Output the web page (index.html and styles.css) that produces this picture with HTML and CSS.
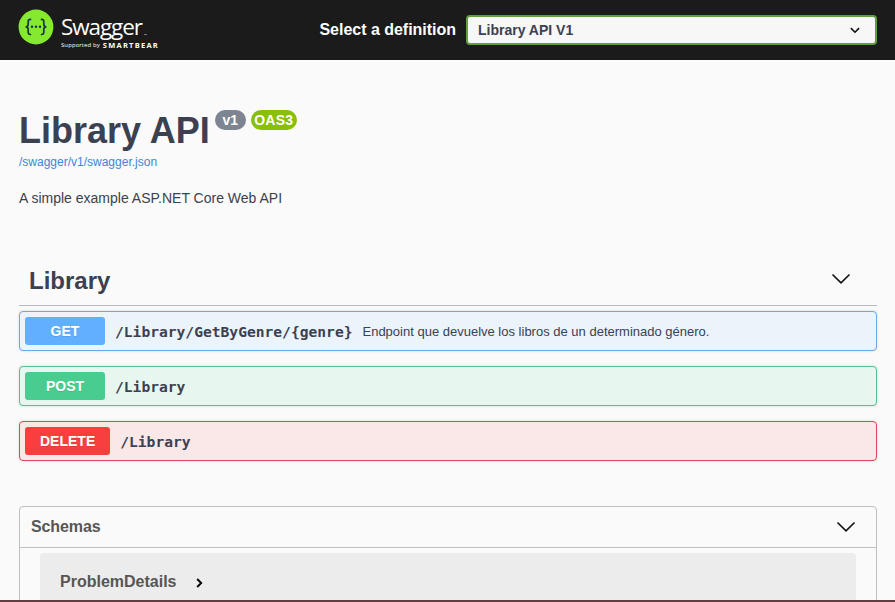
FILE: index.html
```
<!DOCTYPE html>
<html lang="en">
<head>
<meta charset="utf-8">
<title>Library API</title>
<link rel="stylesheet" href="styles.css">
</head>
<body>
<div class="page">
  <header class="topbar">
    <a class="brand">
      <svg class="brand-mark" viewBox="0 0 36 36" width="36" height="36">
        <circle cx="18" cy="18" r="17.400" fill="#85ea2d"/>
        <g fill="none" stroke="#173647" stroke-width="1.700">
          <path d="M13.200 10.300h-.8q-2.200 0-2.200 2.200v2.700q0 2.400-2.500 2.600q2.500.2 2.500 2.600v2.900q0 2.200 2.200 2.200h.8"/>
          <path d="M22.800 10.300h.8q2.200 0 2.200 2.200v2.700q0 2.400 2.500 2.600q-2.500.2-2.500 2.600v2.900q0 2.200-2.200 2.200h-.8"/>
        </g>
        <g fill="#173647"><circle cx="14" cy="17.700" r="1.200"/><circle cx="18" cy="17.700" r="1.200"/><circle cx="22" cy="17.700" r="1.200"/></g>
      </svg>
      <span class="brand-text">
        <span class="brand-name">Swagger<i class="brand-dot"></i></span>
        <span class="brand-sub"><span class="supported">Supported by</span><span class="smartbear">SMARTBEAR</span></span>
      </span>
    </a>
    <div class="definition">
      <span class="definition-label">Select a definition</span>
      <div class="select"><span>Library API V1</span>
        <svg viewBox="0 0 10 7" width="10" height="7"><path d="M.9 1.100L5 5.200L9.100 1.100" fill="none" stroke="#111" stroke-width="1.600"/></svg>
      </div>
    </div>
  </header>
  <main class="content">
    <section class="info">
      <div class="title-row"><h1>Library API</h1><span class="badge version">v1</span><span class="badge oas">OAS3</span></div>
      <a class="spec-link">/swagger/v1/swagger.json</a>
      <p class="description">A simple example ASP.NET Core Web API</p>
    </section>
    <section>
      <div class="tag"><h2>Library</h2>
        <svg viewBox="0 0 20 12" width="20" height="12"><path d="M1.500 1.500L10 9.800L18.500 1.500" fill="none" stroke="#111" stroke-width="1.600"/></svg>
      </div>
      <div class="operation get"><span class="method">GET</span><span class="path">/Library/GetByGenre/{genre}</span><span class="summary">Endpoint que devuelve los libros de un determinado género.</span></div>
      <div class="operation post"><span class="method">POST</span><span class="path">/Library</span></div>
      <div class="operation delete"><span class="method">DELETE</span><span class="path">/Library</span></div>
    </section>
    <section class="schemas">
      <div class="schemas-head"><h3>Schemas</h3>
        <svg viewBox="0 0 20 12" width="20" height="12"><path d="M1.500 1.500L10 9.800L18.500 1.500" fill="none" stroke="#111" stroke-width="1.600"/></svg>
      </div>
      <div class="model"><span>ProblemDetails</span>
        <svg viewBox="0 0 7 10" width="7" height="10"><path d="M1.200 1L5.200 5L1.200 9" fill="none" stroke="#000" stroke-width="1.900"/></svg>
      </div>
    </section>
  </main>
  <div class="bottom-edge"></div>
</div>
</body>
</html>
```
FILE: styles.css
```
* { box-sizing: border-box; }
body { margin: 0; background: #fafafa; color: #3b4151; font-family: "Liberation Sans", Arial, sans-serif; }
h1, h2, h3, p { margin: 0; }
svg { display: block; flex: none; }
.page { height: 602px; overflow: hidden; display: flex; flex-direction: column; }
.topbar { flex: none; height: 60px; background: #1b1b1b; display: flex; justify-content: space-between; padding: 0 18px; }
.brand { display: flex; gap: 7px; padding-top: 9px; color: #fff; }
.brand-text { display: flex; flex-direction: column; padding-top: 4px; }
.brand-name { font-family: "Open Sans", sans-serif; font-size: 22.500px; line-height: 28px; letter-spacing: -1.100px; white-space: nowrap; font-weight: 400; }
.brand-dot { display: inline-block; width: 3px; height: 1px; margin-left: 2px; background: #777; }
.brand-sub { display: flex; align-items: center; gap: 3px; height: 10px; margin-top: -1px; white-space: nowrap; }
.supported { font: 6px/10px "Open Sans", sans-serif; letter-spacing: 0.080px; }
.smartbear { font: 700 7.500px/10px "Open Sans", sans-serif; letter-spacing: 1.250px; }
.definition { display: flex; align-items: center; gap: 10px; }
.definition-label { color: #fff; font-size: 16px; font-weight: 700; letter-spacing: -0.020px; }
.select { width: 411px; height: 30px; border: 2px solid #62a03f; border-radius: 4px; background: #f7f7f7; display: flex; align-items: center; justify-content: space-between; padding: 0 15px 0 10px; font-size: 14px; font-weight: 700; }
.content { flex: 1; min-height: 0; overflow: hidden; padding: 0 18px 0 19px; }
.info { height: 196px; padding-top: 50px; }
.title-row { display: flex; align-items: flex-start; height: 44px; }
h1 { font-size: 36px; line-height: 42px; }
.badge { height: 20px; border-radius: 10px; color: #fff; font-size: 14px; font-weight: 700; line-height: 20px; text-align: center; }
.version { width: 31px; margin-left: 5px; background: #7d8492; }
.oas { width: 46px; margin-left: 5px; background: #89bf04; letter-spacing: 0.200px; }
.spec-link { display: block; font-size: 12px; line-height: 16px; color: #4384d6; }
.description { margin-top: 20px; font-size: 14px; line-height: 16px; }
.tag { height: 50px; border-bottom: 1px solid #b3b8c8; display: flex; align-items: center; justify-content: space-between; padding: 0 26px 0 10px; }
.tag svg { margin-bottom: 3px; }
h2 { font-size: 24px; line-height: 28px; }
.operation { height: 40px; margin: 5px 0 15px; padding: 0 5px; border: 1px solid; border-radius: 4px; box-shadow: 0 0 3px rgba(0,0,0,.14); display: flex; align-items: center; }
.method { min-width: 80px; height: 28px; border-radius: 3px; padding: 0 15px; color: #fff; font-size: 14px; font-weight: 700; line-height: 28px; text-align: center; text-shadow: 0 1px 0 rgba(0,0,0,.1); }
.path { padding: 2px 10px 0; font: 700 14.620px/20px "DejaVu Sans Mono", monospace; }
.summary { font-size: 13px; }
.get { border-color: #68a9e6; background: #ebf3fb; }
.get .method { background: #61affe; }
.post { border-color: #55c193; background: #e8f6f0; }
.post .method { background: #49cc90; }
.delete { border-color: #dc4a58; background: #fae7e7; }
.delete .method { background: #f93e3e; }
.schemas { margin-top: 45px; border: 1px solid #bfc0c3; border-radius: 4px; height: 140px; color: #565656; }
.schemas-head { height: 41px; border-bottom: 1px solid #bfc0c3; display: flex; align-items: center; justify-content: space-between; padding: 0 20px 0 11px; }
h3 { font-size: 16px; line-height: 20px; letter-spacing: -0.100px; }
.model { height: 58px; margin: 5px 20px; border-radius: 4px; background: #ececec; display: flex; align-items: center; gap: 20px; padding: 0 20px; font-size: 16px; font-weight: 700; }
.model svg { margin-top: 2px; }
.bottom-edge { flex: none; height: 2px; background: #623d3d; }
```
